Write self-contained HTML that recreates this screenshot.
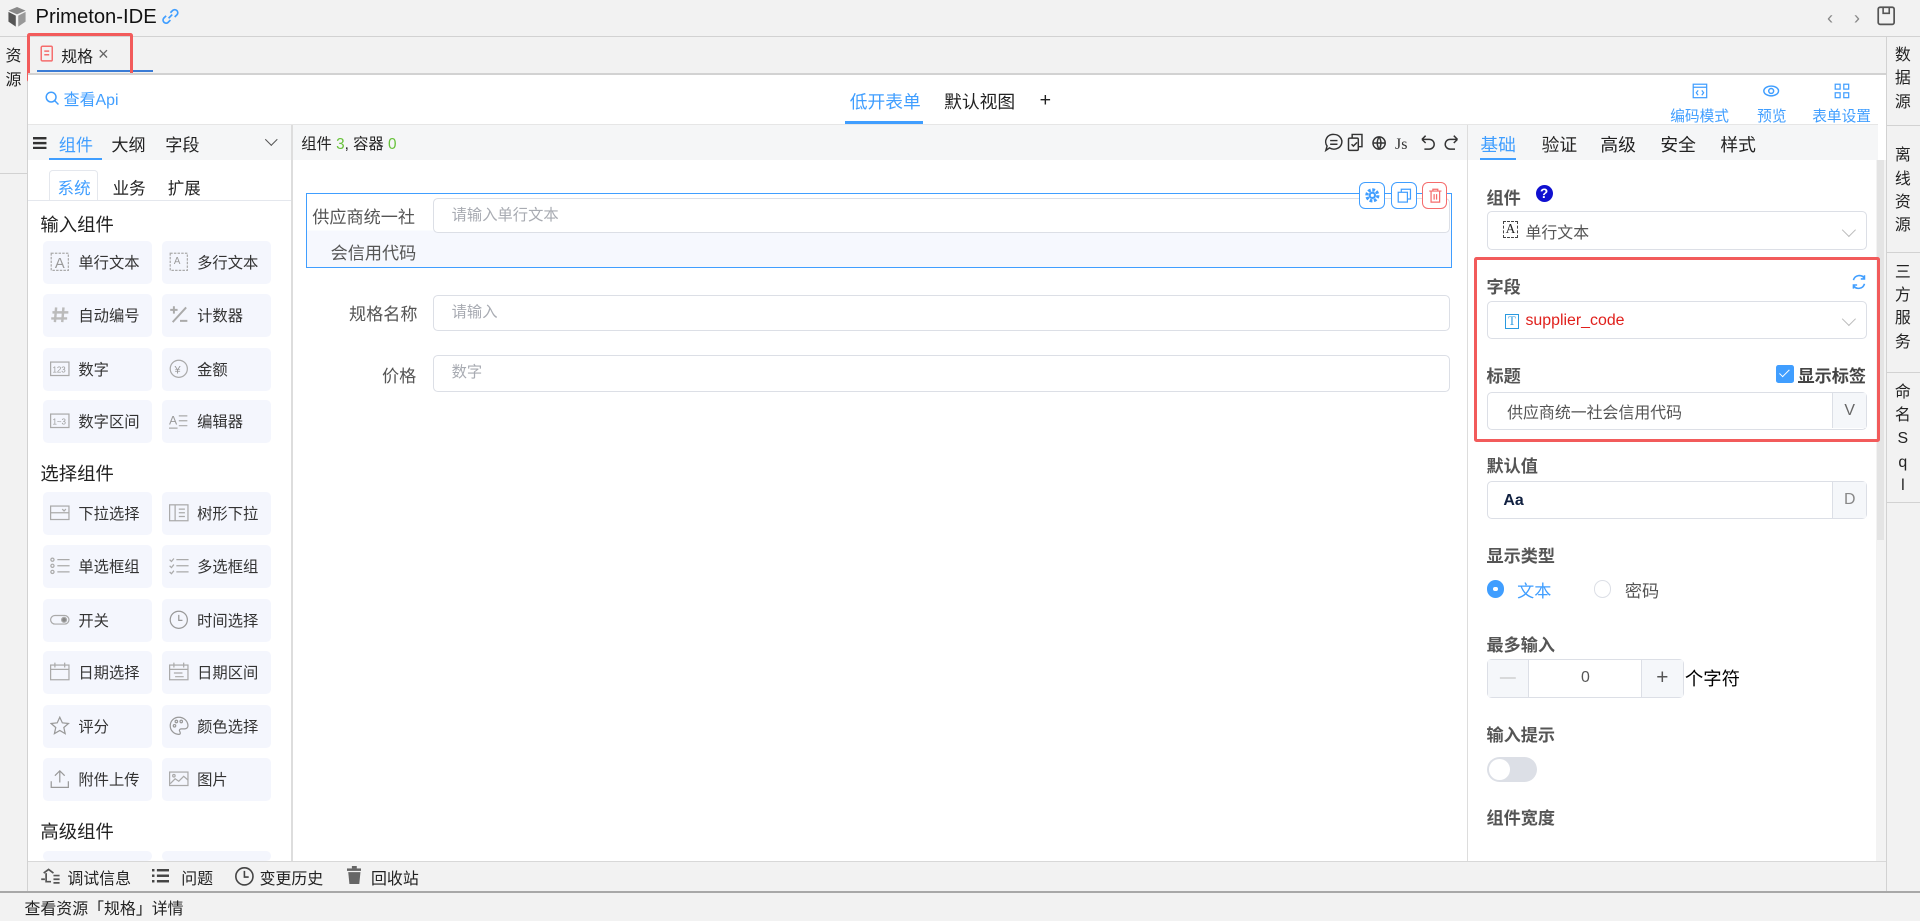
<!DOCTYPE html>
<html><head><meta charset="utf-8"><style>
html{zoom:1.22449}
*{box-sizing:border-box;margin:0;padding:0}
body{width:1568px;height:752px;overflow:hidden;background:#f2f2f2;font-family:"Liberation Sans","Noto Sans CJK SC",sans-serif;color:#333;position:relative;font-size:13px}
.a{position:absolute}
.vt{position:absolute;width:16px;font-size:13px;line-height:19px;text-align:center;color:#222}
.item{position:absolute;width:89px;height:35px;background:#f4f6fd;border-radius:4px;font-size:12.5px;color:#333;line-height:37px;padding-left:29px}
.item svg{position:absolute;left:6px;top:9px}
.inp{position:absolute;border:1px solid #dcdfe6;border-radius:4px;background:#fff;font-size:12.5px;color:#a8abb2;line-height:27px;padding-left:14px}
.lbl{position:absolute;font-size:14px;font-weight:bold;color:#555}
.sel{position:absolute;left:1214px;width:311px;border:1px solid #dcdfe6;border-radius:4px;background:#fff;font-size:13px}
.chev{position:absolute;right:10px;top:11px;width:8px;height:8px;border-right:1px solid #bbb;border-bottom:1px solid #bbb;transform:rotate(45deg)}
.btn{position:absolute;width:21px;height:22px;border:1px solid #409eff;border-radius:5px;background:#fff}
</style></head><body>
<svg class="a" style="left:5px;top:6px" width="18" height="16" viewBox="0 0 18 16"><path d="M2 3l7 3 7-3-7-3z" fill="#888"/><path d="M2 4v8l6 4V7z" fill="#555"/><path d="M16 4v8l-6 4V7z" fill="#999"/></svg>
<div class="a" style="left:29px;top:5px;font-size:16.5px;color:#111">Primeton-IDE</div>
<svg class="a" style="left:131px;top:5px" width="17" height="17" viewBox="0 0 17 17" fill="none" stroke="#409eff" stroke-width="1.4"><path d="M7 10l3-3M5 8l-2 2a2.5 2.5 0 003.5 3.5l2-2M12 9l2-2A2.5 2.5 0 0010.5 3.5l-2 2"/></svg>
<div class="a" style="left:1492px;top:6px;font-size:15px;color:#888">‹</div>
<div class="a" style="left:1514px;top:6px;font-size:15px;color:#888">›</div>
<svg class="a" style="left:1533px;top:5px" width="15" height="16" viewBox="0 0 15 16"><rect x="1" y="1" width="13" height="14" rx="1.5" fill="none" stroke="#555" stroke-width="1.4"/><path d="M5 1v5h5V1" fill="none" stroke="#555" stroke-width="1.3"/></svg>
<div class="a" style="left:0;top:29px;width:1568px;height:1px;background:#d2d2d2"></div>
<div class="vt" style="left:3px;top:37px">资<br>源</div>
<div class="a" style="left:0;top:141px;width:22px;height:1px;background:#d2d2d2"></div>
<div class="a" style="left:22px;top:60px;width:1px;height:668px;background:#d2d2d2"></div>
<svg class="a" style="left:33px;top:37px" width="11" height="14" viewBox="0 0 11 14" fill="none" stroke="#f56c6c" stroke-width="1.2"><rect x="1" y="1" width="9" height="12" rx="1"/><path d="M3.5 5h4M3.5 8h4"/></svg>
<div class="a" style="left:50px;top:36px;font-size:13px;color:#222">规格</div>
<div class="a" style="left:80px;top:35px;font-size:15px;color:#666">×</div>
<div class="a" style="left:30px;top:57px;width:95px;height:2px;background:#3a7bd5"></div>
<div class="a" style="left:22px;top:27px;width:87px;height:40px;border:3px solid #f25b5b;border-radius:2px"></div>
<div class="a" style="left:23px;top:60px;width:1517px;height:1px;background:#d2d2d2"></div>
<div class="a" style="left:23px;top:61px;width:1517px;height:642px;background:#fff"></div>
<svg class="a" style="left:37px;top:74px" width="12" height="12" viewBox="0 0 12 12" fill="none" stroke="#409eff" stroke-width="1.2"><circle cx="5" cy="5" r="4"/><path d="M8 8l3 3"/></svg>
<div class="a" style="left:52px;top:71px;font-size:13px;color:#409eff">查看Api</div>
<div class="a" style="left:694px;top:72px;font-size:14.5px;color:#409eff">低开表单</div>
<div class="a" style="left:690px;top:99px;width:64px;height:2px;background:#409eff"></div>
<div class="a" style="left:771px;top:72px;font-size:14.5px;color:#222">默认视图</div>
<div class="a" style="left:849px;top:73px;font-size:16px;color:#222">+</div>
<svg class="a" style="left:1382px;top:68px" width="13" height="13" viewBox="0 0 13 13" fill="none" stroke="#409eff" stroke-width="1"><rect x="1" y="1" width="11" height="11"/><path d="M1 3.5h11M5 6l-1.5 2L5 10M8 6l1.5 2L8 10"/></svg>
<svg class="a" style="left:1439px;top:68px" width="15" height="13" viewBox="0 0 15 13" fill="none" stroke="#409eff" stroke-width="1.2"><ellipse cx="7.5" cy="6.5" rx="6" ry="4"/><circle cx="7.5" cy="6.5" r="2"/></svg>
<svg class="a" style="left:1498px;top:68px" width="13" height="13" viewBox="0 0 13 13" fill="none" stroke="#409eff" stroke-width="1"><rect x="1" y="1" width="4" height="4"/><rect x="8" y="1" width="4" height="4"/><rect x="1" y="8" width="4" height="4"/><rect x="8" y="8" width="4" height="4"/></svg>
<div class="a" style="left:1364px;top:86px;font-size:12px;color:#409eff">编码模式</div>
<div class="a" style="left:1435px;top:86px;font-size:12px;color:#409eff">预览</div>
<div class="a" style="left:1480px;top:86px;font-size:12px;color:#409eff">表单设置</div>
<div class="a" style="left:23px;top:101px;width:1511px;height:1px;background:#e6e6e6"></div>
<div class="a" style="left:23px;top:102px;width:215px;height:29px;background:#f5f6f7"></div>
<div class="a" style="left:238px;top:102px;width:1px;height:601px;background:#ddd"></div>
<svg class="a" style="left:27px;top:112px" width="11" height="10" viewBox="0 0 11 10" fill="#333"><rect y="0" width="11" height="2"/><rect y="4" width="11" height="2"/><rect y="8" width="11" height="2"/></svg>
<div class="a" style="left:48px;top:107px;font-size:14px;color:#409eff">组件</div>
<div class="a" style="left:40px;top:129px;width:43px;height:2px;background:#409eff"></div>
<div class="a" style="left:91px;top:107px;font-size:14px;color:#222">大纲</div>
<div class="a" style="left:135px;top:107px;font-size:14px;color:#222">字段</div>
<div class="a" style="left:218px;top:110px;width:7px;height:7px;border-right:1px solid #555;border-bottom:1px solid #555;transform:rotate(45deg)"></div>
<div class="a" style="left:40px;top:139px;width:40px;height:25px;border:1px solid #e4e7ed;border-bottom:none;border-radius:3px 3px 0 0;background:#fff"></div>
<div class="a" style="left:47px;top:143px;font-size:13.5px;color:#409eff">系统</div>
<div class="a" style="left:92px;top:143px;font-size:13.5px;color:#222">业务</div>
<div class="a" style="left:137px;top:143px;font-size:13.5px;color:#222">扩展</div>
<div class="a" style="left:23px;top:163px;width:215px;height:1px;background:#e4e7ed"></div>
<div class="a" style="left:33px;top:172px;font-size:15px;color:#222">输入组件</div>
<div class="item" style="left:35px;top:197px"><svg width="16" height="16" viewBox="0 0 16 16"><rect x="1" y="1" width="14" height="14" fill="none" stroke="#aaa" stroke-dasharray="2 1"/><text x="4" y="13" font-size="12" fill="#999">A</text></svg>单行文本</div>
<div class="item" style="left:132px;top:197px"><svg width="16" height="16" viewBox="0 0 16 16"><rect x="1" y="1" width="14" height="14" fill="none" stroke="#aaa" stroke-dasharray="2 1"/><text x="4" y="10" font-size="8" fill="#999">A</text></svg>多行文本</div>
<div class="item" style="left:35px;top:240px"><svg width="16" height="16" viewBox="0 0 16 16" stroke="#bbb" stroke-width="2"><path d="M5 2L4 14M11 2l-1 12M2 6h13M1 11h13"/></svg>自动编号</div>
<div class="item" style="left:132px;top:240px"><svg width="16" height="16" viewBox="0 0 16 16" stroke="#aaa" stroke-width="1.6"><path d="M1 4h6M4 1v6M14 2L3 14M9 13h6"/></svg>计数器</div>
<div class="item" style="left:35px;top:284px"><svg width="16" height="16" viewBox="0 0 16 16"><rect x="0.5" y="2.5" width="15" height="11" fill="none" stroke="#aaa"/><text x="2" y="11" font-size="6.5" fill="#999">123</text></svg>数字</div>
<div class="item" style="left:132px;top:284px"><svg width="16" height="16" viewBox="0 0 16 16"><circle cx="8" cy="8" r="7" fill="none" stroke="#aaa"/><text x="4.5" y="12" font-size="9" fill="#999">¥</text></svg>金额</div>
<div class="item" style="left:35px;top:327px"><svg width="16" height="16" viewBox="0 0 16 16"><rect x="0.5" y="2.5" width="15" height="11" fill="none" stroke="#aaa"/><text x="2" y="11" font-size="6.5" fill="#999">1~3</text></svg>数字区间</div>
<div class="item" style="left:132px;top:327px"><svg width="16" height="16" viewBox="0 0 16 16"><text x="0" y="11" font-size="10" fill="#999">A</text><path d="M8 4h7M8 8h7M8 12h7M0 14h7" stroke="#aaa"/></svg>编辑器</div>
<div class="a" style="left:33px;top:376px;font-size:15px;color:#222">选择组件</div>
<div class="item" style="left:35px;top:402px"><svg width="16" height="16" viewBox="0 0 16 16" fill="none" stroke="#aaa"><rect x="0.5" y="2.5" width="15" height="11"/><path d="M0.5 8h15M10 5l1.5 1.5L13 5"/></svg>下拉选择</div>
<div class="item" style="left:132px;top:402px"><svg width="16" height="16" viewBox="0 0 16 16" fill="none" stroke="#aaa"><rect x="0.5" y="1.5" width="15" height="13"/><path d="M5 1.5v13M8 5h5M8 8h5M8 11h5"/></svg>树形下拉</div>
<div class="item" style="left:35px;top:445px"><svg width="16" height="16" viewBox="0 0 16 16" fill="none" stroke="#aaa"><circle cx="2" cy="3" r="1.3"/><circle cx="2" cy="8" r="1.3"/><circle cx="2" cy="13" r="1.3"/><path d="M6 3h10M6 8h10M6 13h10"/></svg>单选框组</div>
<div class="item" style="left:132px;top:445px"><svg width="16" height="16" viewBox="0 0 16 16" fill="none" stroke="#aaa"><path d="M0.5 3l1.5 1.5L4 2M0.5 8l1.5 1.5L4 7M0.5 13l1.5 1.5L4 12M6 3h10M6 8h10M6 13h10"/></svg>多选框组</div>
<div class="item" style="left:35px;top:489px"><svg width="16" height="16" viewBox="0 0 16 16" fill="none" stroke="#aaa"><rect x="0.5" y="4.5" width="15" height="7" rx="3.5"/><circle cx="11.5" cy="8" r="2" fill="#888"/></svg>开关</div>
<div class="item" style="left:132px;top:489px"><svg width="16" height="16" viewBox="0 0 16 16" fill="none" stroke="#999"><circle cx="8" cy="8" r="7"/><path d="M8 4v4.5h3"/></svg>时间选择</div>
<div class="item" style="left:35px;top:532px"><svg width="16" height="16" viewBox="0 0 16 16" fill="none" stroke="#aaa"><rect x="0.5" y="2.5" width="15" height="12"/><path d="M0.5 6h15M4 0.5v4M12 0.5v4"/></svg>日期选择</div>
<div class="item" style="left:132px;top:532px"><svg width="16" height="16" viewBox="0 0 16 16" fill="none" stroke="#aaa"><rect x="0.5" y="2.5" width="15" height="12"/><path d="M0.5 6h15M4 0.5v4M12 0.5v4M4 9h7M5 12h7"/></svg>日期区间</div>
<div class="item" style="left:35px;top:576px"><svg width="16" height="16" viewBox="0 0 16 16" fill="none" stroke="#999"><path d="M8 1l2.1 4.6 5 .5-3.8 3.3 1.1 5L8 11.8 3.6 14.4l1.1-5L.9 6.1l5-.5z"/></svg>评分</div>
<div class="item" style="left:132px;top:576px"><svg width="16" height="16" viewBox="0 0 16 16" fill="none" stroke="#999"><path d="M8 1a7 7 0 100 14c1.5 0 1.5-1.5.8-2.3-.8-1 0-2.2 1.3-2.2H13a2.5 2.5 0 002.5-2.5C15.5 4 12 1 8 1z"/><circle cx="4.5" cy="8" r="1"/><circle cx="6" cy="4.5" r="1"/><circle cx="10" cy="4.5" r="1"/></svg>颜色选择</div>
<div class="item" style="left:35px;top:619px"><svg width="16" height="16" viewBox="0 0 16 16" fill="none" stroke="#999"><path d="M1 10v5h14v-5M8 11V2M4 5.5L8 1.5l4 4"/></svg>附件上传</div>
<div class="item" style="left:132px;top:619px"><svg width="16" height="16" viewBox="0 0 16 16" fill="none" stroke="#aaa"><rect x="0.5" y="2.5" width="15" height="11"/><circle cx="4" cy="5.5" r="1"/><path d="M1 12l4-4 3 2 4-4 3.5 3"/></svg>图片</div>
<div class="a" style="left:33px;top:668px;font-size:15px;color:#222">高级组件</div>
<div class="item" style="left:35px;top:695px;height:8px"></div>
<div class="item" style="left:132px;top:695px;height:8px"></div>
<div class="a" style="left:239px;top:102px;width:959px;height:29px;background:#f5f6f7"></div>
<div class="a" style="left:246px;top:108px;font-size:12.5px;color:#222">组件 <span style="color:#67c23a">3</span>, 容器 <span style="color:#67c23a">0</span></div>
<svg class="a" style="left:1081px;top:108px" width="112" height="17" viewBox="0 0 112 17" fill="none" stroke="#333" stroke-width="1.2"><path d="M8 2a6.5 6 0 11-3.5 11L1.5 15l1-3.5A6 6 0 018 2zM5 7h6M5 10h6"/><rect x="20" y="5" width="8" height="10" rx="1"/><path d="M23 5V2h8v10h-3M22.5 10l1.5 1.5 3-3"/><circle cx="45" cy="9" r="5"/><path d="M40 9h10M45 4c-2 3-2 7 0 10M45 4c2 3 2 7 0 10"/><text x="58" y="14" font-size="13" fill="#333" stroke="none" font-family="Liberation Serif">Js</text><path d="M80 6h6a4 4 0 010 8h-4M80 6l3-3M80 6l3 3M109 6h-6a4 4 0 000 8h4M109 6l-3-3M109 6l-3 3"/></svg>
<div class="a" style="left:250px;top:158px;width:936px;height:61px;border:1px solid #409eff;background:linear-gradient(#fff 0 50%,#f6f8fe 50%)"></div>
<div class="a" style="left:255px;top:166px;font-size:14px;color:#555">供应商统一社</div>
<div class="a" style="left:270px;top:195px;font-size:14px;color:#555">会信用代码</div>
<div class="inp" style="left:354px;top:162px;width:830px;height:28px">请输入单行文本</div>
<div class="btn" style="left:1110px;top:149px"><svg style="position:absolute;left:4px;top:4px" width="12" height="12" viewBox="0 0 12 12"><circle cx="6" cy="6" r="4.5" fill="none" stroke="#409eff" stroke-width="2.6" stroke-dasharray="2.2 1.3"/><circle cx="6" cy="6" r="3" fill="#409eff"/><circle cx="6" cy="6" r="1.3" fill="#fff"/></svg></div>
<div class="btn" style="left:1136px;top:149px"><svg style="position:absolute;left:4px;top:4px" width="12" height="12" viewBox="0 0 12 12" fill="none" stroke="#409eff"><rect x="1" y="3.5" width="7.5" height="8"/><path d="M3.5 3.5V1h7.5v8H8.5"/></svg></div>
<div class="btn" style="left:1161px;top:149px;border-color:#f56c6c"><svg style="position:absolute;left:4px;top:4px" width="12" height="12" viewBox="0 0 12 12" fill="none" stroke="#f56c6c"><path d="M1 2.5h10M4 2.5V1h4v1.5M2.5 2.5v9h7v-9M5 5v4.5M7 5v4.5"/></svg></div>
<div class="a" style="left:285px;top:245px;font-size:14px;color:#555">规格名称</div>
<div class="inp" style="left:354px;top:241px;width:830px;height:29px">请输入</div>
<div class="a" style="left:312px;top:296px;font-size:14px;color:#555">价格</div>
<div class="inp" style="left:354px;top:290px;width:830px;height:30px">数字</div>
<div class="a" style="left:1198px;top:102px;width:1px;height:601px;background:#ddd"></div>
<div class="a" style="left:1199px;top:102px;width:335px;height:29px;background:#f5f6f7"></div>
<div class="a" style="left:1209px;top:107px;font-size:14.5px;color:#409eff">基础</div>
<div class="a" style="left:1209px;top:129px;width:29px;height:2px;background:#409eff"></div>
<div class="a" style="left:1259px;top:107px;font-size:14.5px;color:#222">验证</div>
<div class="a" style="left:1307px;top:107px;font-size:14.5px;color:#222">高级</div>
<div class="a" style="left:1356px;top:107px;font-size:14.5px;color:#222">安全</div>
<div class="a" style="left:1405px;top:107px;font-size:14.5px;color:#222">样式</div>
<div class="a" style="left:1532px;top:131px;width:8px;height:572px;background:#f3f3f3"></div>
<div class="a" style="left:1533px;top:131px;width:6px;height:310px;background:#e4e4e4"></div>
<div class="lbl" style="left:1214px;top:150px">组件</div>
<div class="a" style="left:1254px;top:151px;width:14px;height:14px;border-radius:50%;background:#1010d0;color:#fff;font-size:11px;font-weight:bold;text-align:center;line-height:14px">?</div>
<div class="sel" style="top:172px;height:32px"><span class="a" style="left:13px;top:8px;border:1px dashed #444;font-size:11px;line-height:12px;padding:0 1px;color:#222;font-family:'Liberation Serif'">A</span><span class="a" style="left:31px;top:7px;color:#555">单行文本</span><i class="chev"></i></div>
<div class="a" style="left:1204px;top:210px;width:331px;height:151px;border:3px solid #f25b5b;border-radius:2px"></div>
<div class="lbl" style="left:1214px;top:223px">字段</div>
<svg class="a" style="left:1512px;top:224px" width="13" height="13" viewBox="0 0 13 13" fill="none" stroke="#409eff" stroke-width="1.3"><path d="M2 5a5 5 0 019-1.5M11 8a5 5 0 01-9 1.5M11 1v3H8M2 12V9h3"/></svg>
<div class="sel" style="top:246px;height:31px"><span class="a" style="left:14px;top:10px;width:12px;height:12px;border:1px solid #2a9ae0;color:#2a9ae0;font-size:10px;line-height:10px;text-align:center;font-family:'Liberation Serif'">T</span><span class="a" style="left:31px;top:8px;color:#e0201c;font-size:13px">supplier_code</span><i class="chev" style="top:10px"></i></div>
<div class="lbl" style="left:1214px;top:296px">标题</div>
<div class="a" style="left:1450px;top:298px;width:15px;height:15px;border-radius:2px;background:#409eff"><div style="position:absolute;left:5px;top:2px;width:4px;height:8px;border-right:1.5px solid #fff;border-bottom:1.5px solid #fff;transform:rotate(45deg)"></div></div>
<div class="lbl" style="left:1468px;top:296px;color:#444">显示标签</div>
<div class="sel" style="top:320px;height:31px"><span class="a" style="left:16px;top:6px;color:#555">供应商统一社会信用代码</span><span class="a" style="right:0;top:0;width:28px;height:29px;background:#f5f7fa;border-left:1px solid #dcdfe6;text-align:center;line-height:29px;color:#666">V</span></div>
<div class="lbl" style="left:1214px;top:369px">默认值</div>
<div class="sel" style="top:393px;height:31px"><span class="a" style="left:13px;top:8px;color:#102040;font-weight:bold">Aa</span><span class="a" style="right:0;top:0;width:28px;height:29px;background:#f5f7fa;border-left:1px solid #dcdfe6;text-align:center;line-height:29px;color:#888">D</span></div>
<div class="lbl" style="left:1214px;top:443px">显示类型</div>
<div class="a" style="left:1214px;top:474px;width:14px;height:14px;border-radius:50%;background:#409eff"><div style="position:absolute;left:5px;top:5px;width:4px;height:4px;border-radius:50%;background:#fff"></div></div>
<div class="a" style="left:1239px;top:471px;font-size:14px;color:#409eff">文本</div>
<div class="a" style="left:1302px;top:474px;width:14px;height:14px;border-radius:50%;border:1px solid #dcdfe6"></div>
<div class="a" style="left:1327px;top:471px;font-size:14px;color:#555">密码</div>
<div class="lbl" style="left:1214px;top:515px">最多输入</div>
<div class="a" style="left:1214px;top:538px;width:161px;height:32px;border:1px solid #dcdfe6;border-radius:4px;background:#fff"><div style="position:absolute;left:0;top:0;width:34px;height:30px;background:#f5f7fa;border-right:1px solid #dcdfe6;text-align:center;line-height:29px;color:#bbb">—</div><div style="position:absolute;left:34px;width:92px;text-align:center;line-height:30px;color:#555">0</div><div style="position:absolute;right:0;top:0;width:34px;height:30px;background:#f5f7fa;border-left:1px solid #dcdfe6;text-align:center;line-height:29px;color:#555;font-size:17px">+</div></div>
<div class="a" style="left:1376px;top:543px;font-size:15px;color:#000">个字符</div>
<div class="lbl" style="left:1214px;top:589px">输入提示</div>
<div class="a" style="left:1214px;top:618px;width:41px;height:21px;border-radius:11px;background:#dcdfe6"><div style="position:absolute;left:2px;top:2px;width:17px;height:17px;border-radius:50%;background:#fff"></div></div>
<div class="lbl" style="left:1214px;top:657px">组件宽度</div>
<div class="a" style="left:1540px;top:30px;width:1px;height:698px;background:#d2d2d2"></div>
<div class="vt" style="left:1546px;top:36px">数<br>据<br>源</div>
<div class="a" style="left:1541px;top:102px;width:27px;height:1px;background:#d2d2d2"></div>
<div class="vt" style="left:1546px;top:118px">离<br>线<br>资<br>源</div>
<div class="a" style="left:1541px;top:206px;width:27px;height:1px;background:#d2d2d2"></div>
<div class="vt" style="left:1546px;top:213px">三<br>方<br>服<br>务</div>
<div class="a" style="left:1541px;top:304px;width:27px;height:1px;background:#d2d2d2"></div>
<div class="vt" style="left:1546px;top:311px">命<br>名<br>S<br>q<br>l</div>
<div class="a" style="left:1541px;top:410px;width:27px;height:1px;background:#d2d2d2"></div>
<div class="a" style="left:23px;top:703px;width:1517px;height:1px;background:#d8d8d8"></div>
<svg class="a" style="left:33px;top:708px" width="17" height="15" viewBox="0 0 17 15" fill="none" stroke="#555" stroke-width="1.4"><path d="M3 5l4-3 4 3M5 5v7h4M1 10h3M11 7h5M11 10h5M11 13h5"/></svg>
<div class="a" style="left:55px;top:707px;font-size:13px;color:#222">调试信息</div>
<svg class="a" style="left:124px;top:710px" width="14" height="11" viewBox="0 0 14 11" fill="#444"><rect width="2" height="2"/><rect x="4" width="10" height="2"/><rect y="4.5" width="2" height="2"/><rect x="4" y="4.5" width="10" height="2"/><rect y="9" width="2" height="2"/><rect x="4" y="9" width="10" height="2"/></svg>
<div class="a" style="left:148px;top:707px;font-size:13px;color:#222">问题</div>
<svg class="a" style="left:191px;top:707px" width="17" height="17" viewBox="0 0 17 17" fill="none" stroke="#444" stroke-width="1.3"><circle cx="8.5" cy="8.5" r="7"/><path d="M8.5 4v5h3.5"/></svg>
<div class="a" style="left:212px;top:707px;font-size:13px;color:#222">变更历史</div>
<svg class="a" style="left:283px;top:707px" width="12" height="15" viewBox="0 0 12 15" fill="#666"><rect x="0" y="2" width="12" height="2"/><rect x="4" y="0" width="4" height="2"/><path d="M1 5h10l-1 10H2z"/></svg>
<div class="a" style="left:303px;top:707px;font-size:13px;color:#222">回收站</div>
<div class="a" style="left:0;top:728px;width:1568px;height:1px;background:#a8a8a8"></div>
<div class="a" style="left:20px;top:732px;font-size:13px;color:#222">查看资源「规格」详情</div>
</body></html>
